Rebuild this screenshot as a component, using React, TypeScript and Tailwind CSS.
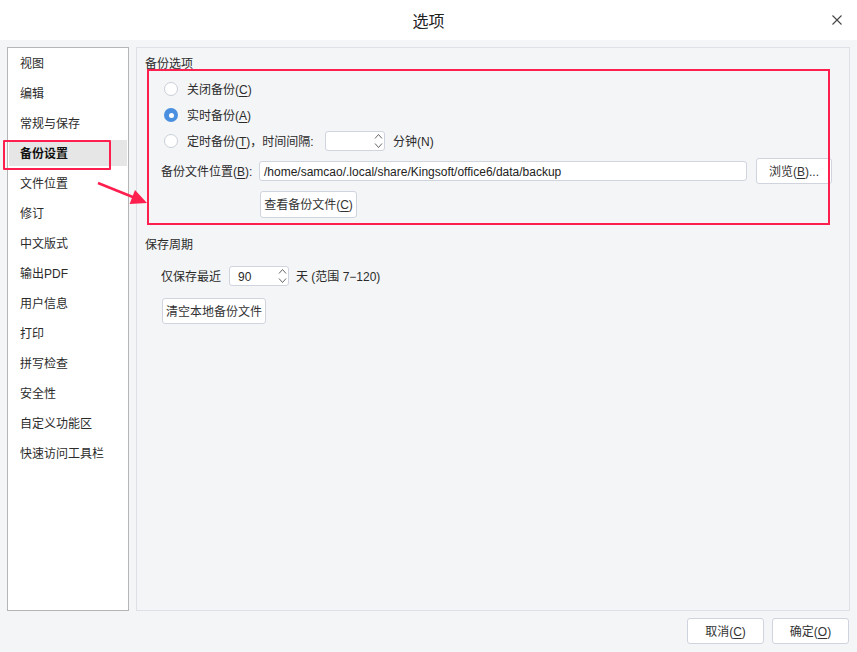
import React from 'react';

const menu = ['视图', '编辑', '常规与保存', '备份设置', '文件位置', '修订', '中文版式', '输出PDF', '用户信息', '打印', '拼写检查', '安全性', '自定义功能区', '快速访问工具栏'];

function Radio({ checked }: { checked?: boolean }) {
  if (checked) {
    return (
      <span className="w-[14px] h-[14px] rounded-full bg-[#4a8fe0] flex items-center justify-center shrink-0">
        <span className="w-[5px] h-[5px] rounded-full bg-white" />
      </span>
    );
  }
  return <span className="w-[14px] h-[14px] rounded-full bg-white border border-[#c9ced8] shrink-0" />;
}

function Spin({ value, width }: { value?: string; width: string }) {
  return (
    <div className={`relative h-[20px] ${width} bg-white border border-[#cfd4de] rounded-[3px] flex items-center pl-[8px] shrink-0`}>
      <span className="pt-px">{value}</span>
      <div className="absolute right-[1px] top-[0px] flex flex-col items-center">
        <svg width="9" height="9" viewBox="0 0 9 9" className="text-[#666]">
          <path d="M1 6.5 L4.5 2.5 L8 6.5" fill="none" stroke="currentColor" strokeWidth="1" />
        </svg>
        <svg width="9" height="9" viewBox="0 0 9 9" className="text-[#666]">
          <path d="M1 2.5 L4.5 6.5 L8 2.5" fill="none" stroke="currentColor" strokeWidth="1" />
        </svg>
      </div>
    </div>
  );
}

function Btn({ children, className = '' }: { children: React.ReactNode; className?: string }) {
  return (
    <button className={`bg-white border border-[#cfd4de] rounded-[3px] flex items-center justify-center pt-px text-[#333] whitespace-nowrap shrink-0 ${className}`}>
      {children}
    </button>
  );
}

export default function App() {
  return (
    <div className="relative w-[857px] h-[652px] bg-[#f4f5f7] flex flex-col text-[12px] text-[#2b2b2b] whitespace-nowrap font-['Liberation_Sans','Noto_Sans_CJK_SC',sans-serif] overflow-hidden">
      {/* Title bar */}
      <div className="h-[40px] bg-white flex items-center justify-center relative shrink-0">
        <span className="text-[16px] text-[#222] font-['Noto_Sans_CJK_SC',sans-serif]">选项</span>
        <svg className="absolute right-[15px] top-[15px]" width="10" height="10" viewBox="0 0 10 10">
          <path d="M0.5 0.5 L9.5 9.5 M9.5 0.5 L0.5 9.5" stroke="#444" strokeWidth="1.1" />
        </svg>
      </div>

      <div className="flex gap-[7px] px-[7px] pt-[7px] h-[571px] shrink-0">
        {/* Sidebar */}
        <div className="w-[122px] h-[564px] bg-white border border-[#b5b5b5] flex flex-col shrink-0">
          {menu.map((m) => {
            const active = m === '备份设置';
            return (
              <div key={m} className="h-[30px] flex items-center px-px">
                <div className={`h-[26px] w-full flex items-center pl-[11px] pt-[2px] ${active ? 'bg-[#e6e6e6] text-[#111] font-bold' : ''}`}>
                  {m}
                </div>
              </div>
            );
          })}
        </div>

        {/* Content */}
        <div className="flex-1 h-[564px] border border-[#dde0e6] flex flex-col">
          <div className="h-[20px] mt-[6px] pl-[8px] flex items-center">备份选项</div>

          <div className="h-[20px] mt-[5px] pl-[27px] flex items-center gap-[9px]">
            <Radio />
            <span className="pt-[2px]">关闭备份(<u className="underline-offset-2">C</u>)</span>
          </div>
          <div className="h-[20px] mt-[6px] pl-[27px] flex items-center gap-[9px]">
            <Radio checked />
            <span className="pt-[2px]">实时备份(<u className="underline-offset-2">A</u>)</span>
          </div>
          <div className="h-[20px] mt-[6px] pl-[27px] flex items-center gap-[9px]">
            <Radio />
            <span className="w-[129px] pt-[2px]">定时备份(<u className="underline-offset-2">T</u>)，时间间隔:</span>
            <Spin width="w-[60px]" />
            <span className="ml-[-1px] pt-[2px]">分钟(N)</span>
          </div>

          <div className="h-[26px] mt-[7px] pl-[24px] flex items-center">
            <span className="w-[98px] shrink-0 pt-px">备份文件位置(<u className="underline-offset-2">B</u>):</span>
            <div className="h-[20px] w-[488px] shrink-0 bg-white border border-[#cfd4de] rounded-[3px] flex items-center pl-[4px] pt-px text-[#222]">
              /home/samcao/.local/share/Kingsoft/office6/data/backup
            </div>
            <Btn className="ml-[9px] w-[76px] h-[26px]">
              浏览(<u className="underline-offset-2">B</u>)...
            </Btn>
          </div>

          <div className="mt-[7px] pl-[123px] flex">
            <Btn className="w-[97px] h-[27px]">
              查看备份文件(<u className="underline-offset-2">C</u>)
            </Btn>
          </div>

          <div className="h-[20px] mt-[16px] pl-[8px] pt-px flex items-center">保存周期</div>

          <div className="h-[20px] mt-[12px] pl-[24px] flex items-center">
            <span className="w-[68px] pt-px">仅保存最近</span>
            <Spin value="90" width="w-[60px]" />
            <span className="ml-[7px] pt-px">天 (范围 7−120)</span>
          </div>

          <div className="mt-[12px] pl-[25px] flex">
            <Btn className="w-[104px] h-[26px]">清空本地备份文件</Btn>
          </div>
        </div>
      </div>

      {/* Footer buttons */}
      <div className="flex justify-end gap-[8px] pr-[8px] mt-[7px]">
        <Btn className="w-[77px] h-[26px]">
          取消(<u className="underline-offset-2">C</u>)
        </Btn>
        <Btn className="w-[77px] h-[26px]">
          确定(<u className="underline-offset-2">O</u>)
        </Btn>
      </div>

      {/* Annotations */}
      <div className="absolute left-[3px] top-[140px] w-[108px] h-[30px] border-2 border-[#ff1f4e] rounded-[1px]" />
      <div className="absolute left-[147px] top-[69px] w-[683px] h-[156px] border-2 border-[#ff1f4e]" />
      <svg className="absolute left-0 top-0 pointer-events-none" width="857" height="652">
        <line x1="98" y1="183" x2="134" y2="197.5" stroke="#ff1f4e" strokeWidth="2.5" />
        <polygon points="147,203 129.6,204 135,190" fill="#ff1f4e" />
      </svg>
    </div>
  );
}
